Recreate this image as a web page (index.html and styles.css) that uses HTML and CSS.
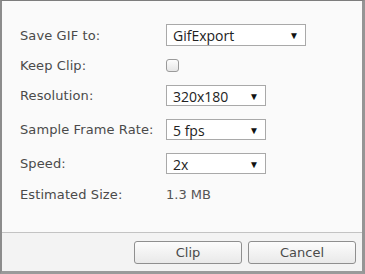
FILE: index.html
```html
<!DOCTYPE html>
<html lang="en">
<head>
<meta charset="utf-8">
<title>Export GIF</title>
<link rel="stylesheet" href="styles.css">
</head>
<body>
<div class="dlg">
  <div class="dlg-body">
    <div class="row r-tall">
      <span class="lbl">Save GIF to:</span>
      <div class="sel sel-wide">GifExport<span class="arr">&#9660;</span></div>
    </div>
    <div class="row r-chk">
      <span class="lbl">Keep Clip:</span>
      <span class="chk"></span>
    </div>
    <div class="row">
      <span class="lbl">Resolution:</span>
      <div class="sel">320x180<span class="arr">&#9660;</span></div>
    </div>
    <div class="row">
      <span class="lbl">Sample Frame Rate:</span>
      <div class="sel">5 fps<span class="arr">&#9660;</span></div>
    </div>
    <div class="row">
      <span class="lbl">Speed:</span>
      <div class="sel">2x<span class="arr">&#9660;</span></div>
    </div>
    <div class="row r-txt">
      <span class="lbl">Estimated Size:</span>
      <span class="val">1.3 MB</span>
    </div>
  </div>
  <div class="dlg-foot">
    <button class="btn">Clip</button>
    <button class="btn">Cancel</button>
  </div>
</div>
</body>
</html>
```
FILE: styles.css
```css
* {box-sizing: border-box;}
html,body {margin: 0;padding: 0;}
body {width: 365px;height: 274px;font-family: "DejaVu Sans", Verdana, sans-serif;font-size: 13px;color: #4a4a4a;}
.dlg {width: 365px;height: 274px;background: #fafafa;border-style: solid;border-color: #7d7d7d #959595 #9a9a9a #8c8c8c;border-width: 1px 3px 3px 2px;display: flex;flex-direction: column;}
.dlg-body {flex: 1;padding: 23px 0 0 18px;display: flex;flex-direction: column;gap: 13px;}
.row {display: flex;align-items: center;height: 21px;}
.r-tall {height: 22px;}
.r-chk {height: 13px;}
.r-txt {height: 14px;}
.lbl {width: 146px;flex: none;letter-spacing: 0.1px;}
.val {color: #555;}
.sel {position: relative;width: 100px;height: 100%;border: 1px solid #a9a9a9;background: #fff;font-family: "Open Sans", "Liberation Sans", sans-serif;font-size: 14px;color: #222;padding: 1px 0 0 6px;display: flex;align-items: center;}
.sel-wide {width: 140px;}
.arr {position: absolute;right: 6px;top: 50%;transform: translateY(-50%);font-size: 10px;color: #111;}
.chk {width: 13px;height: 13px;border: 1px solid #9a9a9a;border-radius: 3px;background: linear-gradient(#fdfdfd, #e6e6e6);}
.dlg-foot {height: 39px;border-top: 1px solid #c3c3c3;background: #f3f3f3;display: flex;justify-content: flex-end;align-items: flex-start;gap: 6px;padding: 8px 6px 0 0;}
.btn {width: 108px;height: 23px;border: 1px solid #8f8f8f;border-radius: 3px;background: linear-gradient(#fcfcfc, #e9e9e9);font-family: "DejaVu Sans", Verdana, sans-serif;font-size: 13px;color: #4a4a4a;padding: 0;}
```
